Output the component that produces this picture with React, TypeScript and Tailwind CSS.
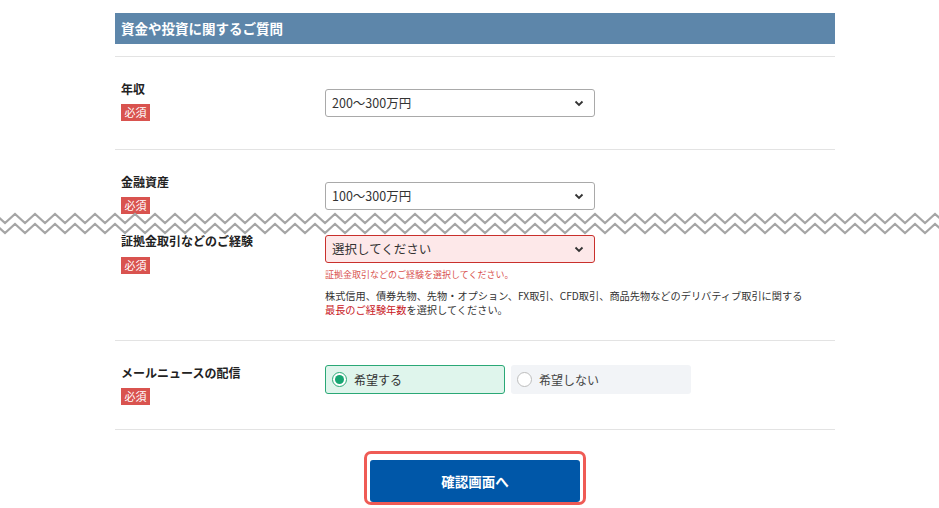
import clsx from 'clsx';

const font = "font-['Noto_Sans_CJK_JP','Noto_Sans',sans-serif]";

function Badge() {
  return (
    <span className="flex items-center justify-center w-[29px] h-[17px] bg-[#d9534f] text-white text-[11px] leading-none">
      必須
    </span>
  );
}

function Chevron() {
  return (
    <svg width="10" height="7" viewBox="0 0 10 7">
      <path d="M1.5 1.5 5 5l3.5-3.5" fill="none" stroke="#333" strokeWidth="1.8" />
    </svg>
  );
}

function Select({ value, error }: { value: string; error?: boolean }) {
  return (
    <div
      className={clsx(
        'w-[270px] h-[28px] rounded-[3px] border flex items-center justify-between pl-[6px] pr-[10px] text-[12.5px] text-[#333]',
        error ? 'border-[#c9302c] bg-[#fde8e9]' : 'border-[#a9a9a9] bg-white'
      )}
    >
      <span>{value}</span>
      <Chevron />
    </div>
  );
}

function Label({ children }: { children: string }) {
  return <div className="text-[12px] leading-[20px] font-bold text-[#222]">{children}</div>;
}

function Zigzag() {
  const top: string[] = [];
  const bottom: string[] = [];
  for (let x = -15; x <= 965; x += 10) {
    const peak = ((x % 20) + 20) % 20 === 15;
    top.push(`${x},${peak ? 5 : 14}`);
    bottom.push(`${x},${peak ? 15 : 24}`);
  }
  const fill = [...top, ...bottom.slice().reverse()].join(' ');
  return (
    <svg className="absolute left-0 top-[209px] w-[939px] h-[28px]" viewBox="0 0 939 28">
      <polygon points={fill} fill="#fff" />
      <polyline points={top.join(' ')} fill="none" stroke="#a5a5a5" strokeWidth="2.2" />
      <polyline points={bottom.join(' ')} fill="none" stroke="#a5a5a5" strokeWidth="2.2" />
    </svg>
  );
}

export default function App() {
  return (
    <div className={clsx('relative w-[939px] h-[508px] overflow-hidden bg-white text-[#333]', font)}>
      <div className="ml-[115px] w-[720px] pt-[13px]">
        <div className="h-[31px] bg-[#5d86aa] flex items-center pl-[6px] text-white font-bold text-[13.5px]">
          資金や投資に関するご質問
        </div>

        <div className="mt-[12px] border-b border-[#e3e3e3]" />

        {/* 年収 */}
        <div className="flex h-[93px] border-b border-[#e3e3e3]">
          <div className="w-[210px] pl-[6px] pt-[22px]">
            <Label>年収</Label>
            <div className="mt-[5px] flex">
              <Badge />
            </div>
          </div>
          <div className="pt-[32px]">
            <Select value="200〜300万円" />
          </div>
        </div>

        {/* 金融資産 */}
        <div className="flex h-[71px] overflow-hidden">
          <div className="w-[210px] pl-[6px] pt-[22px]">
            <Label>金融資産</Label>
            <div className="mt-[5px] flex">
              <Badge />
            </div>
          </div>
          <div className="pt-[32px]">
            <Select value="100〜300万円" />
          </div>
        </div>

        {/* 証拠金取引 */}
        <div className="flex h-[120px] border-b border-[#e3e3e3]">
          <div className="w-[210px] pl-[6px] pt-[10px]">
            <Label>証拠金取引などのご経験</Label>
            <div className="mt-[6px] flex">
              <Badge />
            </div>
          </div>
          <div className="pt-[14px]">
            <Select value="選択してください" error />
            <div className="mt-[5px] text-[9px] leading-[14px] text-[#d9534f]">
              証拠金取引などのご経験を選択してください。
            </div>
            <div className="mt-[7px] text-[10.2px] leading-[14px] text-[#333]">
              株式信用、債券先物、先物・オプション、FX取引、CFD取引、商品先物などのデリバティブ取引に関する
              <br />
              <span className="text-[#c8161d]">最長のご経験年数</span>を選択してください。
            </div>
          </div>
        </div>

        {/* メールニュース */}
        <div className="flex h-[89px] border-b border-[#e3e3e3]">
          <div className="w-[210px] pl-[6px] pt-[22px]">
            <Label>メールニュースの配信</Label>
            <div className="mt-[5px] flex">
              <Badge />
            </div>
          </div>
          <div className="pt-[24px] flex gap-[6px] items-start">
            <div className="w-[180px] h-[29px] rounded-[3px] border border-[#2aa876] bg-[#dff5ec] flex items-center pl-[6px] gap-[7px] text-[12px]">
              <span className="w-[15px] h-[15px] rounded-full border border-[#2aa876] bg-white flex items-center justify-center">
                <span className="w-[9px] h-[9px] rounded-full bg-[#17a673]" />
              </span>
              希望する
            </div>
            <div className="w-[180px] h-[29px] rounded-[3px] bg-[#f2f4f7] flex items-center pl-[6px] gap-[7px] text-[12px] text-[#444]">
              <span className="w-[15px] h-[15px] rounded-full border border-[#bdbdbd] bg-white" />
              希望しない
            </div>
          </div>
        </div>

        <div className="flex justify-center pt-[21px]">
          <div className="rounded-[7px] border-[3px] border-[#ef5b55] pt-[6px] px-[3px] pb-0">
            <button className="w-[210px] h-[42px] rounded-[3px] bg-[#0057a8] text-white font-bold text-[13.5px]">
              確認画面へ
            </button>
          </div>
        </div>
      </div>

      <Zigzag />
    </div>
  );
}
